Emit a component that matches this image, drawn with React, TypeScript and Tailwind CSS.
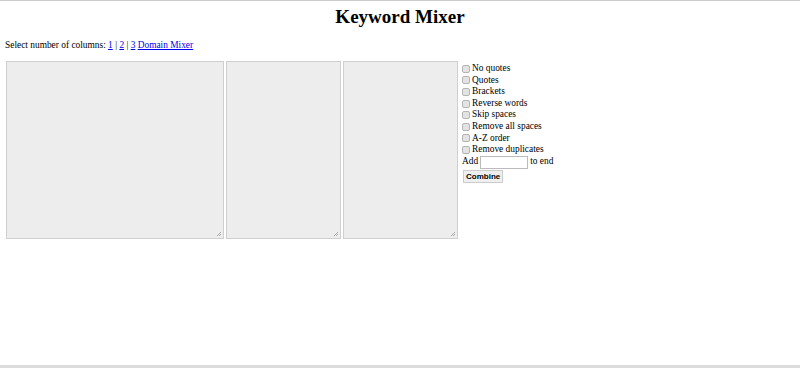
import React from "react";

const opts = [
  "No quotes",
  "Quotes",
  "Brackets",
  "Reverse words",
  "Skip spaces",
  "Remove all spaces",
  "A-Z order",
  "Remove duplicates",
];

function Box() {
  return (
    <span className="inline-block w-[8px] h-[8px] mr-[2px] rounded-[2px] border border-[#b5b5b5] bg-[#e3e3e3]" />
  );
}

function Area({ w }: { w: string }) {
  return (
    <div className={`relative ${w} h-[178px] border border-[#cfcfcf] bg-[#ededed]`}>
      <svg className="absolute right-[1px] bottom-[1px]" width="6" height="6" viewBox="0 0 6 6">
        <path d="M1 5 L5 1 M3 5 L5 3" stroke="#999" strokeWidth="0.8" />
      </svg>
    </div>
  );
}

export default function App() {
  return (
    <div className="w-[800px] h-[368px] flex flex-col bg-white text-black overflow-hidden" style={{ fontFamily: '"Liberation Serif", serif' }}>
      <div className="h-[1px] bg-[#cccccc]" />
      <div className="flex-1">
        <h1 className="text-center font-bold text-[19px] leading-[20px] mt-[6px]">Keyword Mixer</h1>
        <div className="text-[9.4px] leading-[12px] mt-[12px] ml-[5px]">
          Select number of columns: <a className="text-[#0000ee] underline">1</a> | <a className="text-[#0000ee] underline">2</a> | <a className="text-[#0000ee] underline">3</a> <a className="text-[#0000ee] underline">Domain Mixer</a>
        </div>
        <div className="flex mt-[10px] ml-[6px] gap-[2px] items-start">
          <Area w="w-[218px]" />
          <Area w="w-[115px]" />
          <Area w="w-[115px]" />
          <div className="ml-[2px] mt-[2px] text-[9.4px] leading-[11.6px]">
            {opts.map((o) => (
              <div key={o} className="flex items-center">
                <Box />
                <span>{o}</span>
              </div>
            ))}
            <div className="flex items-center">
              <span>Add</span>
              <span className="inline-block w-[48px] h-[13px] border border-[#bbbbbb] bg-white mx-[2px]" />
              <span>to end</span>
            </div>
            <button className="mt-[1px] ml-[1px] px-[2px] h-[13px] border border-[#cccccc] bg-[#efefef] text-[8px] font-bold leading-[11px]" style={{ fontFamily: '"Liberation Sans", sans-serif' }}>
              Combine
            </button>
          </div>
        </div>
      </div>
      <div className="h-[3px] bg-[#dcdcdc]" />
    </div>
  );
}
